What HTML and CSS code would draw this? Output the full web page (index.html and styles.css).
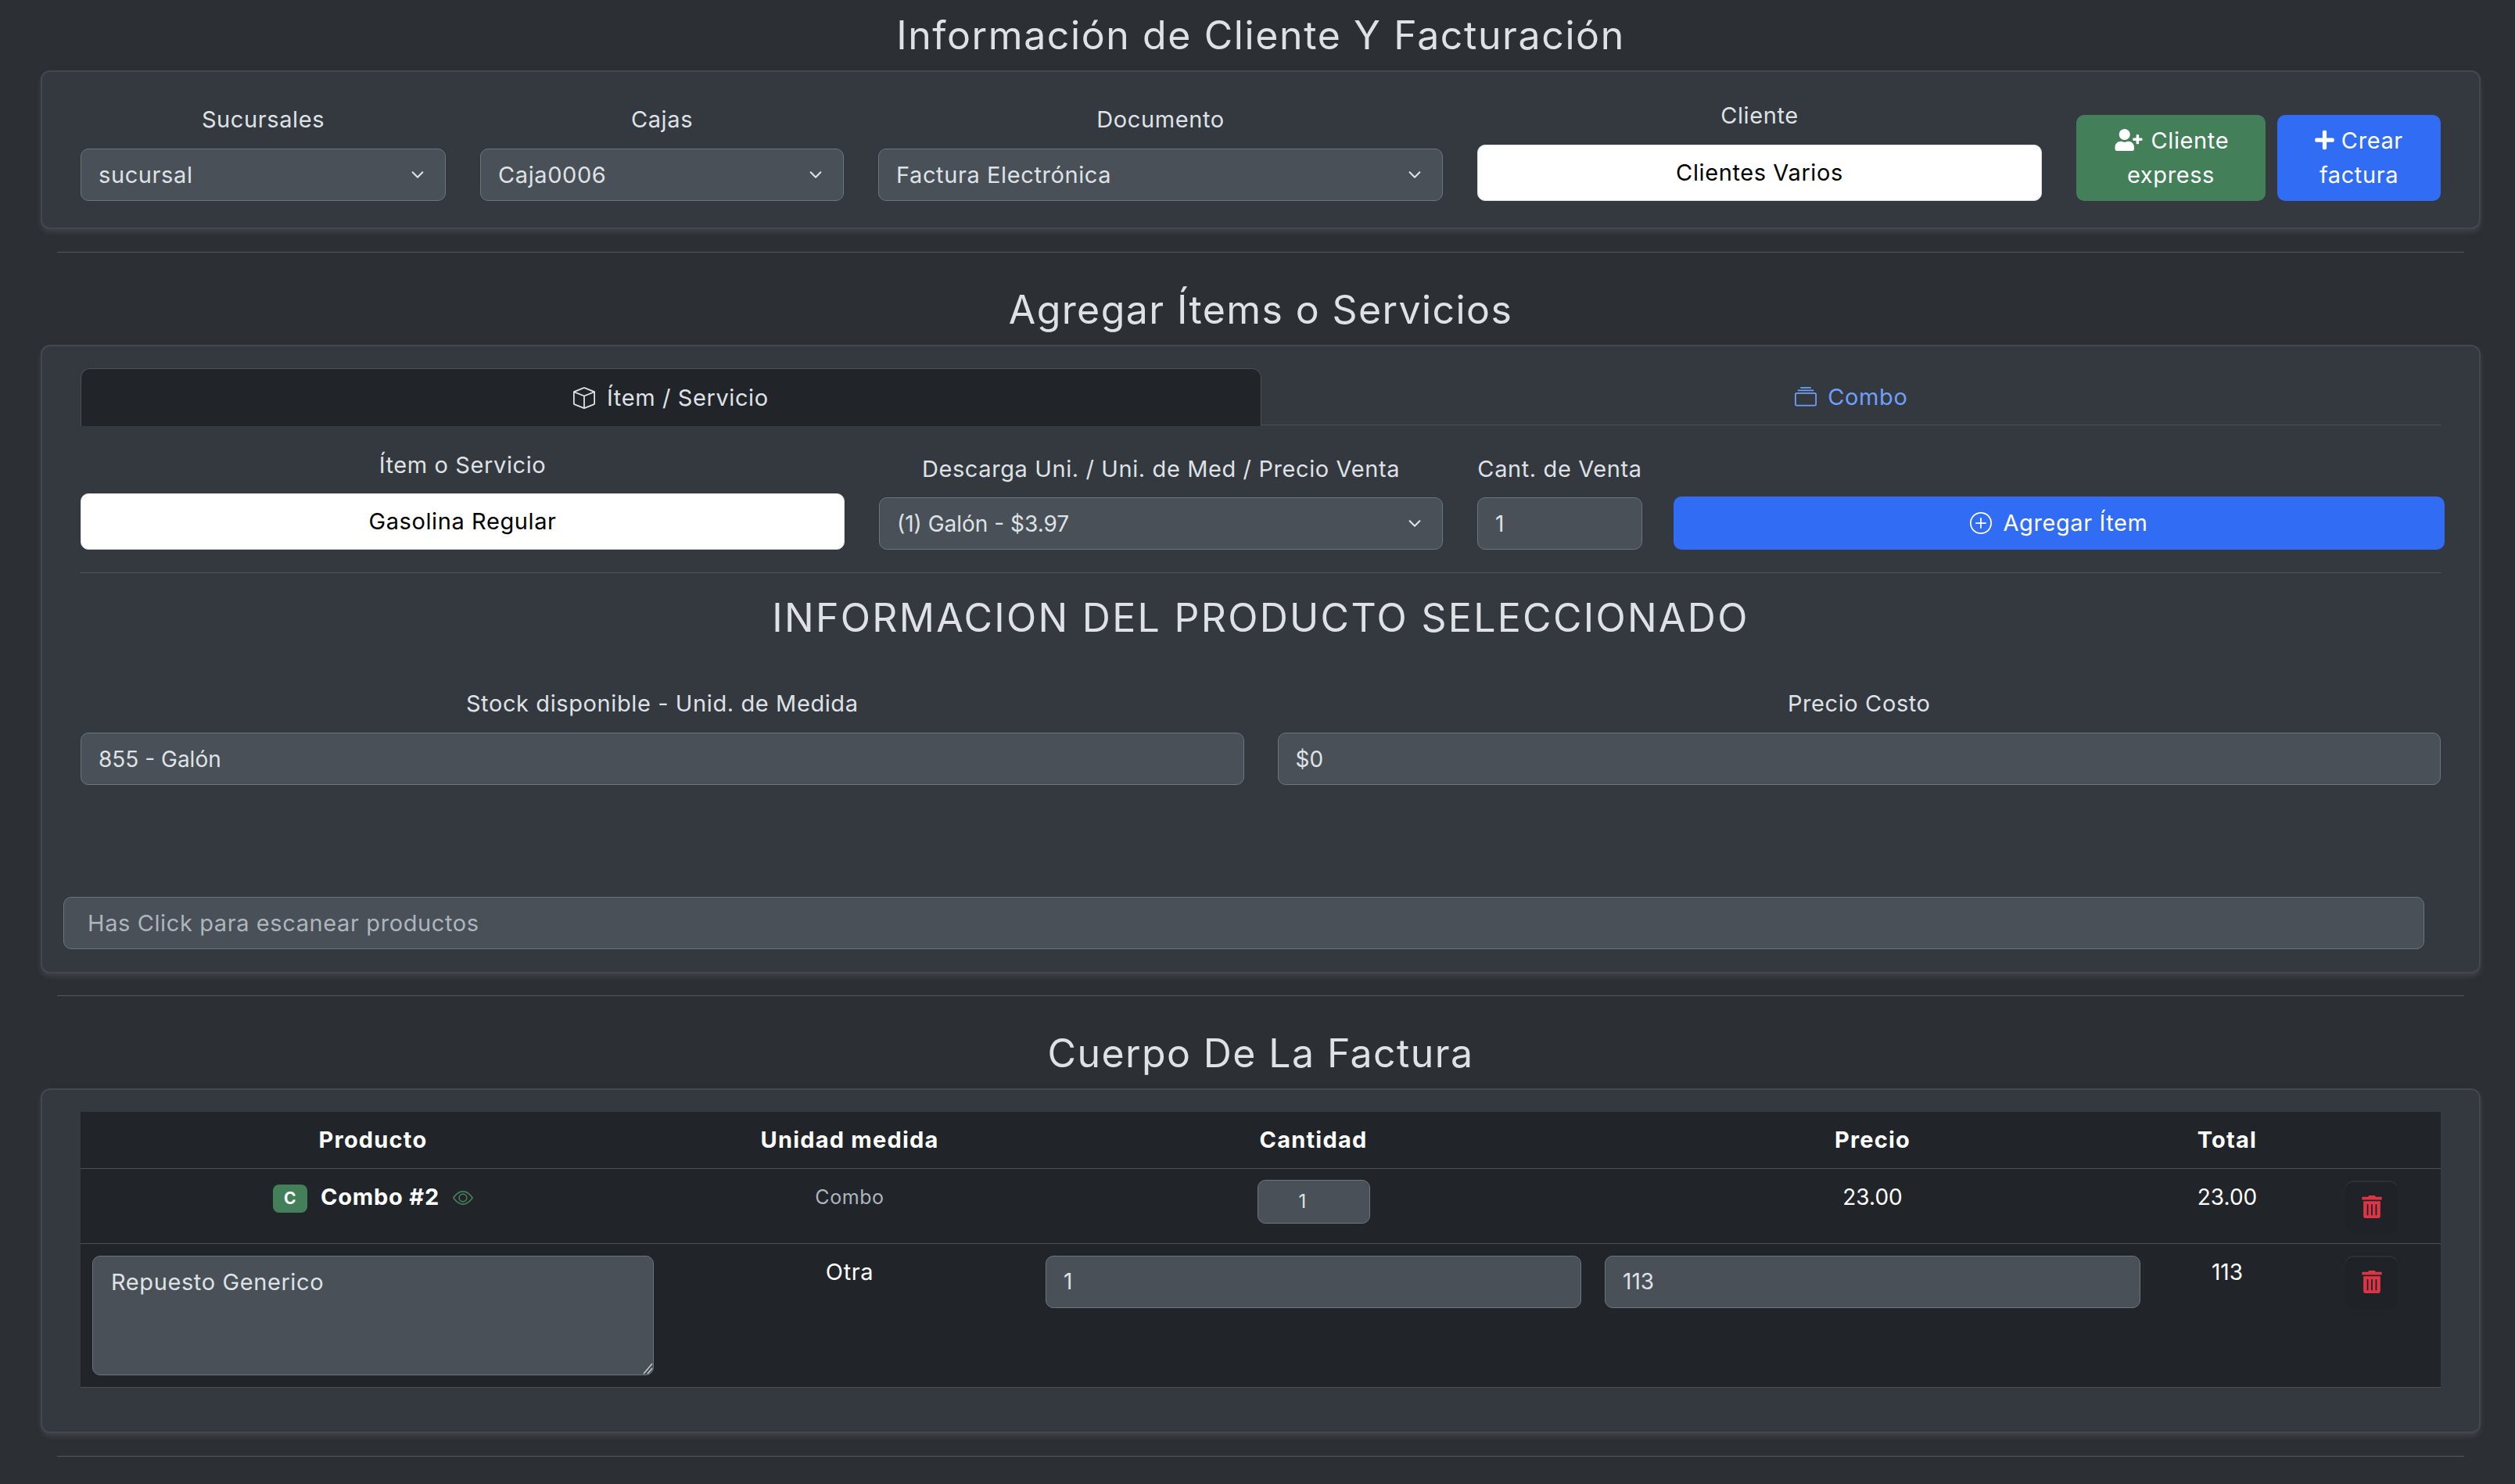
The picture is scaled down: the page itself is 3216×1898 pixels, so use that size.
FILE: index.html
```html
<!DOCTYPE html>
<html lang="es">
  <head>
    <meta charset="UTF-8" />
    <meta name="viewport" content="width=device-width, initial-scale=1.0" />
    <title>Facturación</title>
    <link rel="stylesheet" href="styles.css">
  </head>
  <body>
    <h3 class="title title-first">Información de Cliente Y Facturación</h3>
    <section class="card card-client">
      <div class="client-row">
        <div class="field">
          <label>Sucursales</label>
          <select class="control"><option>sucursal</option></select>
        </div>
        <div class="field">
          <label>Cajas</label>
          <select class="control"><option>Caja0006</option></select>
        </div>
        <div class="field">
          <label>Documento</label>
          <select class="control"><option>Factura Electrónica</option></select>
        </div>
        <div class="field">
          <label>Cliente</label>
          <div class="picker">Clientes Varios</div>
        </div>
        <div class="client-actions">
          <button class="btn btn-green" type="button">
            <svg class="icon-user" viewBox="0 0 640 512"><path fill="currentColor" d="M624 208h-64v-64c0-8.8-7.2-16-16-16h-32c-8.8 0-16 7.2-16 16v64h-64c-8.8 0-16 7.2-16 16v32c0 8.8 7.2 16 16 16h64v64c0 8.8 7.2 16 16 16h32c8.8 0 16-7.2 16-16v-64h64c8.8 0 16-7.2 16-16v-32c0-8.8-7.2-16-16-16zm-400 48c70.7 0 128-57.3 128-128S294.7 0 224 0 96 57.3 96 128s57.3 128 128 128zm89.6 32h-16.7c-22.2 10.2-46.9 16-72.9 16s-50.6-5.8-72.9-16h-16.7C60.2 288 0 348.2 0 422.4V464c0 26.5 21.5 48 48 48h352c26.5 0 48-21.5 48-48v-41.6c0-74.2-60.2-134.4-134.4-134.4z"/></svg>
            Cliente express
          </button>
          <button class="btn btn-blue" type="button">
            <svg class="icon-plus" viewBox="0 0 448 512"><path fill="currentColor" d="M416 208H272V64c0-17.67-14.33-32-32-32h-32c-17.67 0-32 14.33-32 32v144H32c-17.67 0-32 14.33-32 32v32c0 17.67 14.33 32 32 32h144v144c0 17.67 14.33 32 32 32h32c17.67 0 32-14.33 32-32V304h144c17.67 0 32-14.33 32-32v-32c0-17.67-14.33-32-32-32z"/></svg>
            Crear factura
          </button>
        </div>
      </div>
    </section>
    <hr class="divider" />

    <h3 class="title">Agregar Ítems o Servicios</h3>
    <section class="card card-items">
      <div class="tabs">
        <a class="tab tab-active">
          <svg class="icon-tab" viewBox="0 0 16 16"><path fill="currentColor" d="M8.186 1.113a.5.5 0 0 0-.372 0L1.846 3.5 8 5.961 14.154 3.5 8.186 1.113zM15 4.239l-6.5 2.6v7.922l6.5-2.6V4.24zM7.5 14.762V6.838L1 4.239v7.925l6.5 2.598zM7.443.184a1.5 1.5 0 0 1 1.114 0l7.129 2.852A.5.5 0 0 1 16 3.5v8.662a1 1 0 0 1-.629.928l-7.185 2.874a.5.5 0 0 1-.372 0L.63 13.09a1 1 0 0 1-.63-.928V3.5a.5.5 0 0 1 .314-.464L7.443.184z"/></svg>
          Ítem / Servicio
        </a>
        <a class="tab">
          <svg class="icon-tab" viewBox="0 0 16 16"><path fill="currentColor" d="M2.5 3.5a.5.5 0 0 1 0-1h11a.5.5 0 0 1 0 1h-11zm2-2a.5.5 0 0 1 0-1h7a.5.5 0 0 1 0 1h-7zM0 13a1.5 1.5 0 0 0 1.5 1.5h13A1.5 1.5 0 0 0 16 13V6a1.5 1.5 0 0 0-1.5-1.5h-13A1.5 1.5 0 0 0 0 6v7zm1.5.5A.5.5 0 0 1 1 13V6a.5.5 0 0 1 .5-.5h13a.5.5 0 0 1 .5.5v7a.5.5 0 0 1-.5.5h-13z"/></svg>
          Combo
        </a>
      </div>
      <div class="item-row">
        <div class="field">
          <label>Ítem o Servicio</label>
          <div class="picker">Gasolina Regular</div>
        </div>
        <div class="field">
          <label>Descarga Uni. / Uni. de Med / Precio Venta</label>
          <select class="control control-num"><option>(1) Galón - $3.97</option></select>
        </div>
        <div class="field">
          <label>Cant. de Venta</label>
          <input class="control control-num" type="text" value="1" />
        </div>
        <button class="btn btn-blue btn-add" type="button">
          <svg class="icon-tab" viewBox="0 0 16 16"><path fill="currentColor" d="M8 15A7 7 0 1 1 8 1a7 7 0 0 1 0 14zm0 1A8 8 0 1 0 8 0a8 8 0 0 0 0 16z"/><path fill="currentColor" d="M8 4a.5.5 0 0 1 .5.5v3h3a.5.5 0 0 1 0 1h-3v3a.5.5 0 0 1-1 0v-3h-3a.5.5 0 0 1 0-1h3v-3A.5.5 0 0 1 8 4z"/></svg>
          Agregar Ítem
        </button>
      </div>
      <hr class="divider-inner" />
      <h3 class="title title-info">INFORMACION DEL PRODUCTO SELECCIONADO</h3>
      <div class="info-row">
        <div class="field">
          <label>Stock disponible - Unid. de Medida</label>
          <input class="control control-num" type="text" value="855 - Galón" />
        </div>
        <div class="field">
          <label>Precio Costo</label>
          <input class="control control-num" type="text" value="$0" />
        </div>
      </div>
      <input class="control control-scan" type="text" placeholder="Has Click para escanear productos" />
    </section>
    <hr class="divider divider-tight" />

    <h3 class="title">Cuerpo De La Factura</h3>
    <section class="card card-body">
      <table class="invoice">
        <thead>
          <tr>
            <th class="col-product">Producto</th>
            <th class="col-unit">Unidad medida</th>
            <th class="col-qty">Cantidad</th>
            <th class="col-price">Precio</th>
            <th class="col-total">Total</th>
            <th class="col-del"></th>
          </tr>
        </thead>
        <tbody>
          <tr class="row-combo">
            <td>
              <span class="badge">C</span>
              <strong class="combo-name">Combo #2</strong>
              <svg class="icon-eye" viewBox="0 0 16 16"><path fill="currentColor" d="M16 8s-3-5.5-8-5.5S0 8 0 8s3 5.5 8 5.5S16 8 16 8zM1.173 8a13.133 13.133 0 0 1 1.66-2.043C4.12 4.668 5.88 3.5 8 3.5c2.12 0 3.879 1.168 5.168 2.457A13.133 13.133 0 0 1 14.828 8c-.058.087-.122.183-.195.288-.335.48-.83 1.12-1.465 1.755C11.879 11.332 10.119 12.5 8 12.5c-2.12 0-3.879-1.168-5.168-2.457A13.134 13.134 0 0 1 1.172 8z"/><path fill="currentColor" d="M8 5.5a2.5 2.5 0 1 0 0 5 2.5 2.5 0 0 0 0-5zM4.5 8a3.5 3.5 0 1 1 7 0 3.5 3.5 0 0 1-7 0z"/></svg>
            </td>
            <td class="muted">Combo</td>
            <td><input class="control control-small" type="text" value="1" /></td>
            <td class="cell-num">23.00</td>
            <td class="cell-num">23.00</td>
            <td>
              <button class="btn-trash" type="button">
                <svg viewBox="0 0 448 512"><path fill="currentColor" d="M32 464a48 48 0 0 0 48 48h288a48 48 0 0 0 48-48V128H32zm272-256a16 16 0 0 1 32 0v224a16 16 0 0 1-32 0zm-96 0a16 16 0 0 1 32 0v224a16 16 0 0 1-32 0zm-96 0a16 16 0 0 1 32 0v224a16 16 0 0 1-32 0zM432 32H312l-9.4-18.7A24 24 0 0 0 281.1 0H166.8a23.72 23.72 0 0 0-21.4 13.3L136 32H16A16 16 0 0 0 0 48v32a16 16 0 0 0 16 16h416a16 16 0 0 0 16-16V48a16 16 0 0 0-16-16z"/></svg>
              </button>
            </td>
          </tr>
          <tr>
            <td>
              <div class="area-wrap">
                <textarea class="control control-area">Repuesto Generico</textarea>
                <svg class="area-grip" viewBox="0 0 15 17"><path d="M14 3 3 16M14 9 8 16" fill="none" stroke="#c4c8cc" stroke-width="1.5"/></svg>
              </div>
            </td>
            <td>Otra</td>
            <td><input class="control control-num" type="text" value="1" /></td>
            <td><input class="control control-num" type="text" value="113" /></td>
            <td class="cell-num">113</td>
            <td>
              <button class="btn-trash" type="button">
                <svg viewBox="0 0 448 512"><path fill="currentColor" d="M32 464a48 48 0 0 0 48 48h288a48 48 0 0 0 48-48V128H32zm272-256a16 16 0 0 1 32 0v224a16 16 0 0 1-32 0zm-96 0a16 16 0 0 1 32 0v224a16 16 0 0 1-32 0zm-96 0a16 16 0 0 1 32 0v224a16 16 0 0 1-32 0zM432 32H312l-9.4-18.7A24 24 0 0 0 281.1 0H166.8a23.72 23.72 0 0 0-21.4 13.3L136 32H16A16 16 0 0 0 0 48v32a16 16 0 0 0 16 16h416a16 16 0 0 0 16-16V48a16 16 0 0 0-16-16z"/></svg>
              </button>
            </td>
          </tr>
        </tbody>
      </table>
    </section>
    <hr class="divider divider-last" />
  </body>
</html>
```

FILE: styles.css
```css
* {
  box-sizing: border-box;
}
body {
  margin: 0;
  padding: 0 44px 0 52px;
  height: 1898px;
  overflow: hidden;
  background: #2c2f34;
  color: #dee2e6;
  font-family: "Inter", "Noto Sans", sans-serif;
  font-size: 29px;
  letter-spacing: 0.6px;
  line-height: 42px;
}

/* titles */
.title {
  height: 90px;
  margin: 28px 0 0;
  font-size: 50px;
  font-weight: 400;
  letter-spacing: 1.4px;
  line-height: 90px;
  text-align: center;
  color: #dee2e6;
}
.title-first {
  margin-top: 0;
  letter-spacing: 1.6px;
}
.title-info {
  margin-top: 12px;
  letter-spacing: 2.3px;
}

/* cards */
.card {
  background: #34383f;
  border: 2px solid #44484e;
  border-radius: 12px;
  box-shadow: 0 4px 6px rgba(70, 74, 80, 0.7);
}
.card-client {
  padding: 35px 49px 34px;
}
.card-items {
  padding: 28px 49px 29px;
}
.card-body {
  padding: 28px 49px 56px;
}
.divider {
  margin: 29px 21px 0;
  height: 1px;
  border: 0;
  background: #55585d;
}
.divider-tight {
  margin-top: 28px;
}
.divider-last {
  margin-top: 29px;
}
.divider-inner {
  margin: 29px 0 0;
  height: 1px;
  border: 0;
  background: #55585d;
}

/* rows */
.client-row {
  display: grid;
  grid-template-columns: 467px 465px 722px 722px 466px;
  column-gap: 44px;
  align-items: end;
}
.client-row .field label,
.info-row .field label {
  margin-bottom: 16px;
}
.client-actions {
  display: flex;
  gap: 15px;
}
.item-row {
  display: grid;
  grid-template-columns: 977px 721px 211px 1fr;
  column-gap: 44px;
  align-items: end;
  padding-top: 30px;
}
.info-row {
  display: grid;
  grid-template-columns: 1fr 1fr;
  column-gap: 43px;
  padding-top: 44px;
}
.field label {
  display: block;
  margin-bottom: 15px;
  text-align: center;
  color: #dee2e6;
}

/* form controls */
.control {
  display: block;
  width: 100%;
  height: 67px;
  padding: 0 22px;
  background-color: #495057;
  border: 1px solid #6c757d;
  border-radius: 10px;
  color: #dee2e6;
  font-family: inherit;
  font-size: 29px;
  letter-spacing: 0.6px;
}
.control-num {
  font-size: 28px;
  letter-spacing: 0;
}
.control::placeholder {
  color: #adb5bd;
}
select.control {
  appearance: none;
  padding-right: 70px;
  background-image: url("data:image/svg+xml,%3csvg xmlns='http://www.w3.org/2000/svg' viewBox='0 0 16 16'%3e%3cpath fill='none' stroke='%23dee2e6' stroke-linecap='round' stroke-linejoin='round' stroke-width='2' d='m2 5 6 6 6-6'/%3e%3c/svg%3e");
  background-repeat: no-repeat;
  background-position: right 24px center;
  background-size: 22px 17px;
}
.control-scan {
  width: 3019px;
  margin: 143px 0 0 -22px;
  padding: 0 30px;
}
.control-small {
  width: 144px;
  height: 56px;
  margin: -1px auto 0;
  padding: 0 50px 0 22px;
  font-size: 24px;
  letter-spacing: 0;
  text-align: center;
}
.area-wrap {
  position: relative;
}
.control-area {
  height: 153px;
  padding: 12px 23px;
  line-height: 42px;
  resize: none;
}
.area-grip {
  position: absolute;
  right: 1px;
  bottom: 1px;
  width: 15px;
  height: 17px;
  pointer-events: none;
}
.picker {
  height: 72px;
  background: #fff;
  border: 1px solid #dee2e6;
  border-radius: 10px;
  color: #000;
  line-height: 70px;
  text-align: center;
}

/* buttons */
.btn {
  border: 0;
  border-radius: 10px;
  color: #fff;
  font-family: inherit;
  font-size: 29px;
  letter-spacing: 0.6px;
  line-height: 44px;
  text-align: center;
}
.btn-green {
  width: 242px;
  height: 110px;
  padding: 0 20px;
  background: #438059;
}
.btn-blue {
  flex: 1;
  height: 110px;
  padding: 0 20px;
  background: #316cf4;
}
.btn-add {
  height: 68px;
  margin: 0 -5px 0 -4px;
  line-height: 42px;
  display: flex;
  align-items: center;
  justify-content: center;
  gap: 14px;
}
.icon-user {
  width: 40px;
  height: 28px;
  vertical-align: -3px;
}
.icon-plus {
  width: 25px;
  height: 28px;
  vertical-align: -3px;
}
.icon-tab {
  width: 28px;
  height: 28px;
  vertical-align: -4px;
  margin-right: 6px;
}
.btn-add .icon-tab {
  margin-right: 0;
}
.btn-trash {
  display: flex;
  align-items: center;
  justify-content: center;
  width: 67px;
  height: 67px;
  margin: 0 auto;
  padding: 0;
  background: #1f2327;
  border: 0;
  box-shadow: inset 0 2px 0 #2e3237;
  border-radius: 10px;
  color: #dc3545;
}
.btn-trash svg {
  display: block;
  width: 26px;
  height: 29px;
}

/* tabs */
.tabs {
  display: flex;
  border-bottom: 1px solid #4d5157;
  height: 73px;
}
.tab {
  flex: 1;
  height: 74px;
  line-height: 74px;
  text-align: center;
  color: #6ea0f7;
}
.tab-active {
  background: #212529;
  border: 1px solid #4d5157;
  border-bottom: 0;
  border-radius: 12px 12px 0 0;
  color: #dee2e6;
}

/* invoice table */
.invoice {
  width: 100%;
  table-layout: fixed;
  border-collapse: collapse;
  background: #212529;
  color: #fff;
}
.invoice th {
  height: 72px;
  padding: 0;
  font-weight: 700;
  letter-spacing: 1.2px;
  border-bottom: 1px solid #4d5157;
}
.invoice td {
  padding: 15px;
  text-align: center;
  vertical-align: top;
  border-bottom: 1px solid #4d5157;
}
.invoice .row-combo td {
  padding-bottom: 13px;
}
.invoice .cell-num {
  font-size: 28px;
  letter-spacing: 0;
}
.col-product {
  width: 748px;
}
.col-unit {
  width: 471px;
}
.col-qty,
.col-price {
  width: 715px;
}
.col-total {
  width: 192px;
}
.muted {
  font-size: 25px;
  color: #adb5bd;
}
.badge {
  display: inline-block;
  width: 44px;
  height: 36px;
  margin-right: 8px;
  background: #438059;
  border-radius: 8px;
  color: #fff;
  font-size: 21px;
  font-weight: 700;
  line-height: 36px;
  text-align: center;
  vertical-align: 1px;
}
.combo-name {
  font-weight: 700;
  letter-spacing: 0.8px;
}
.icon-eye {
  width: 26px;
  height: 26px;
  margin-left: 8px;
  vertical-align: -4px;
  color: #438059;
}
```
